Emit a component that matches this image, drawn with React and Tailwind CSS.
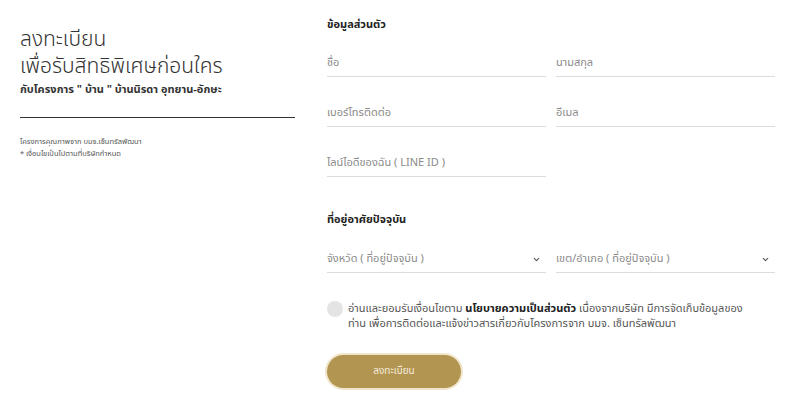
import React from 'react';
import { ChevronDown } from 'lucide-react';

const font = { fontFamily: '"Noto Sans Thai", "Noto Sans", "Liberation Sans", sans-serif' };

function Field({ label, select = false }) {
  return (
    <div className="flex h-[26px] items-center justify-between border-b border-[#dcdcdc]">
      <span className="text-[11px] text-[#8a8a8a]">{label}</span>
      {select && <ChevronDown size={9} strokeWidth={3} className="mr-[5px] text-[#555]" />}
    </div>
  );
}

export default function App() {
  return (
    <div className="flex h-[404px] w-[800px] bg-white text-[#222]" style={font}>
      {/* Left intro */}
      <div className="w-[327px] shrink-0 pl-5 pt-[26px]">
        <h1 className="text-[21px] font-light leading-[27px] text-[#333]">
          ลงทะเบียน
          <br />
          เพื่อรับสิทธิพิเศษก่อนใคร
        </h1>
        <p className="mt-[2px] text-[11px] font-bold leading-[16px] text-[#333]">
          กับโครงการ " บ้าน " บ้านนิรดา อุทยาน-อักษะ
        </p>
        <div className="mt-[19px] w-[275px] border-b border-[#333]" />
        <div className="mt-[18px] text-[7.5px] leading-[12px] text-[#555]">
          <p>โครงการคุณภาพจาก บมจ.เซ็นทรัลพัฒนา</p>
          <p>* เงื่อนไขเป็นไปตามที่บริษัทกำหนด</p>
        </div>
      </div>

      {/* Form */}
      <div className="w-[448px] pt-[17px]">
        <h2 className="text-[11px] font-bold leading-[16px]">ข้อมูลส่วนตัว</h2>
        <div className="mt-[18px] grid grid-cols-2 gap-x-[10px] gap-y-[24px]">
          <Field label="ชื่อ" />
          <Field label="นามสกุล" />
          <Field label="เบอร์โทรติดต่อ" />
          <Field label="อีเมล" />
          <Field label="ไลน์ไอดีของฉัน ( LINE ID )" />
        </div>

        <h2 className="mt-[35px] text-[11px] font-bold leading-[16px]">ที่อยู่อาศัยปัจจุบัน</h2>
        <div className="mt-[19px] grid grid-cols-2 gap-x-[10px]">
          <Field label="จังหวัด ( ที่อยู่ปัจจุบัน )" select />
          <Field label="เขต/อำเภอ ( ที่อยู่ปัจจุบัน )" select />
        </div>

        <div className="mt-[28px] flex items-start gap-[5px]">
          <span className="h-[16px] w-[16px] shrink-0 rounded-full bg-[#e4e4e4]" />
          <p className="w-[415px] text-[11px] leading-[15px] text-[#555]">
            อ่านและยอมรับเงื่อนไขตาม <b className="leading-[15px] text-[#222]">นโยบายความเป็นส่วนตัว</b> เนื่องจากบริษัท มีการจัดเก็บข้อมูลของ
            ท่าน เพื่อการติดต่อและแจ้งข่าวสารเกี่ยวกับโครงการจาก บมจ. เซ็นทรัลพัฒนา
          </p>
        </div>

        <button className="mt-[24px] h-[33px] w-[134px] rounded-full bg-[#b39552] text-[10px] text-[#f4ecdc] ring-2 ring-[#f1e6cc]">
          ลงทะเบียน
        </button>
      </div>
    </div>
  );
}
